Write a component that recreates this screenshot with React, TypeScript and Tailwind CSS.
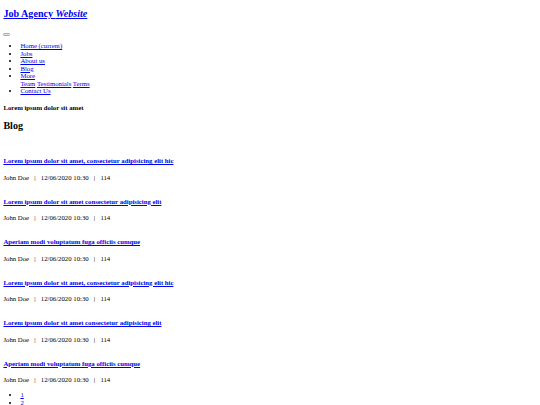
const navItems = ['Home (current)', 'Jobs', 'About us', 'Blog', 'More'];
const moreLinks = ['Team', 'Testimonials', 'Terms'];

const posts = [
  'Lorem ipsum dolor sit amet, consectetur adipisicing elit hic',
  'Lorem ipsum dolor sit amet consectetur adipisicing elit',
  'Aperiam modi voluptatum fuga officiis cumque',
  'Lorem ipsum dolor sit amet, consectetur adipisicing elit hic',
  'Lorem ipsum dolor sit amet consectetur adipisicing elit',
  'Aperiam modi voluptatum fuga officiis cumque',
];

function PostMeta() {
  return (
    <p className="leading-[7.6px] whitespace-pre">
      John Doe <span className="px-[3.5px]">|</span> 12/06/2020 10:30 <span className="px-[3.5px]">|</span> 114
    </p>
  );
}

export default function App() {
  return (
    <div className="min-h-screen bg-white text-black font-['Liberation_Serif',serif] text-[6.75px] leading-[7.6px] flex flex-col px-[3.4px] pt-[8.2px] overflow-hidden">
      {/* Brand */}
      <h1 className="text-[10.1px] leading-[11.6px] font-bold">
        <a href="#" className="text-[#0000ee] underline">
          Job Agency <em>Website</em>
        </a>
      </h1>

      {/* Toggler */}
      <div className="mt-[8.4px] h-[7.6px]">
        <span className="block mt-[4.6px] w-[7px] h-[2.8px] rounded-[1.2px] border-[0.5px] border-[#a9a9a9] bg-[#e6e6e6]" />
      </div>

      {/* Nav */}
      <ul className="mt-[6.4px] pl-[17px] list-disc leading-[7.5px]">
        {navItems.map((item) => (
          <li key={item}>
            <a href="#" className="text-[#0000ee] underline">{item}</a>
            {item === 'More' && (
              <div>
                {moreLinks.map((l, i) => (
                  <span key={l}>
                    <a href="#" className="text-[#0000ee] underline">{l}</a>
                    {i < moreLinks.length - 1 ? ' ' : ''}
                  </span>
                ))}
              </div>
            )}
          </li>
        ))}
        <li>
          <a href="#" className="text-[#0000ee] underline">Contact Us</a>
        </li>
      </ul>

      <h4 className="mt-[9px] font-bold">Lorem ipsum dolor sit amet</h4>

      <h2 className="mt-[9px] text-[10.1px] leading-[11.6px] font-bold">Blog</h2>

      {/* Posts */}
      <div className="mt-[25.2px] flex flex-col gap-[16.5px]">
        {posts.map((title, i) => (
          <div key={i} className="flex flex-col gap-[8.9px]">
            <h4 className="font-bold">
              <a href="#" className="text-[#0000ee] underline">{title}</a>
            </h4>
            <PostMeta />
          </div>
        ))}
      </div>

      {/* Pagination */}
      <ul className="mt-[7px] pl-[17px] list-disc leading-[7.5px]">
        <li>
          <a href="#" className="text-[#0000ee] underline">1</a>
        </li>
        <li>
          <a href="#" className="text-[#0000ee] underline">2</a>
        </li>
      </ul>
    </div>
  );
}
